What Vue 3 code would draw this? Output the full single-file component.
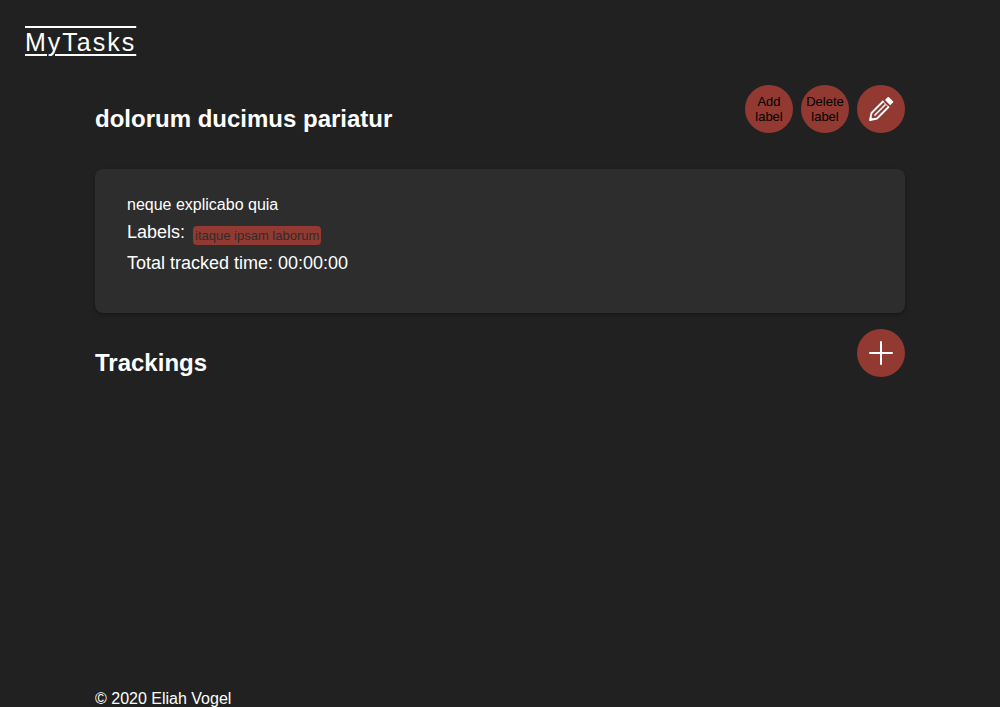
<script setup>
const task = {
  title: 'dolorum ducimus pariatur',
  description: 'neque explicabo quia',
  labels: ['itaque ipsam laborum'],
  total: '00:00:00',
}
</script>

<template>
  <div class="page">
    <header class="header">
      <a class="brand" href="#">MyTasks</a>
    </header>

    <main class="content">
      <div class="bar">
        <h1 class="title">{{ task.title }}</h1>
        <div class="actions">
          <button class="round" type="button">Add label</button>
          <button class="round" type="button">Delete label</button>
          <button class="round" type="button" aria-label="Edit task">
            <svg width="26" height="26" viewBox="0 0 26 26" fill="none" stroke="#fff">
              <path d="M15.500 5 3.500 17 2 24l7-1.500 12-12" stroke-width="1.800" stroke-linejoin="round" />
              <path d="M17.500 8.500 6.500 19.500" stroke-width="1.600" />
              <path d="M15 5.500l5.500 5.500" stroke-width="1" />
              <path d="M1.500 24.500l1-4 3 3z" fill="#fff" stroke="none" />
              <path d="M17 4 19.600 1.200Q20.300.600 21 1.200l4 4q.6.700 0 1.400L22.200 9.300z" fill="#fff" stroke="none" />
            </svg>
          </button>
        </div>
      </div>

      <section class="card">
        <p class="description">{{ task.description }}</p>
        <div class="labels">
          <span>Labels:</span>
          <span v-for="label in task.labels" :key="label" class="label">{{ label }}</span>
        </div>
        <p class="total">Total tracked time: {{ task.total }}</p>
      </section>

      <div class="bar">
        <h2 class="title">Trackings</h2>
        <div class="actions">
          <button class="round" type="button" aria-label="Add tracking">
            <svg width="24" height="24" viewBox="0 0 24 24" fill="none" stroke="#fff" stroke-width="2" stroke-linecap="round">
              <path d="M12 1v22M1 12h22" />
            </svg>
          </button>
        </div>
      </div>
    </main>

    <footer class="footer">© 2020 Eliah Vogel</footer>
  </div>
</template>

<style>
body {
  background: #212121;
}
</style>

<style scoped>
.page {
  display: flex;
  flex-direction: column;
  min-height: 100vh;
  color: #fff;
  font-family: "Liberation Sans", Arial, sans-serif;
  font-size: 16px;
  line-height: 20px;
}

.header {
  padding: 24px 25px 0;
}

.brand {
  display: inline-block;
  color: #fff;
  font-size: 25px;
  line-height: 37px;
  letter-spacing: 2px;
  text-decoration: underline overline;
  text-decoration-thickness: 2px;
  text-underline-offset: 3px;
}

.content {
  flex: 1;
  padding: 24px 95px 0;
}

.bar {
  display: flex;
  justify-content: space-between;
  align-items: flex-start;
}

.title {
  margin: 20px 0;
  font-size: 24px;
  line-height: 28px;
  font-weight: 700;
}

.actions {
  display: flex;
  gap: 8px;
}

.round {
  display: flex;
  align-items: center;
  justify-content: center;
  width: 48px;
  height: 48px;
  padding: 0;
  border: 0;
  border-radius: 50%;
  background: #923a31;
  color: #000;
  font-family: inherit;
  font-size: 13px;
  line-height: 15px;
  text-align: center;
  cursor: pointer;
}

.card {
  margin: 16px 0;
  padding: 26px 32px 40px;
  border-radius: 8px;
  background: #2d2d2d;
  box-shadow: 0 2px 4px rgba(0, 0, 0, 0.3);
}

.description {
  margin: 0 0 6px;
}

.labels {
  display: flex;
  align-items: flex-start;
  gap: 8px;
  font-size: 18px;
  line-height: 22px;
}

.label {
  margin-top: 5px;
  padding: 2px;
  border-radius: 4px;
  background: #923a31;
  color: #2d2d2d;
  font-size: 13px;
  line-height: 15px;
}

.total {
  margin: 8px 0 0;
  font-size: 18px;
  line-height: 20px;
}

.footer {
  padding: 0 95px;
  line-height: 16px;
}
</style>
